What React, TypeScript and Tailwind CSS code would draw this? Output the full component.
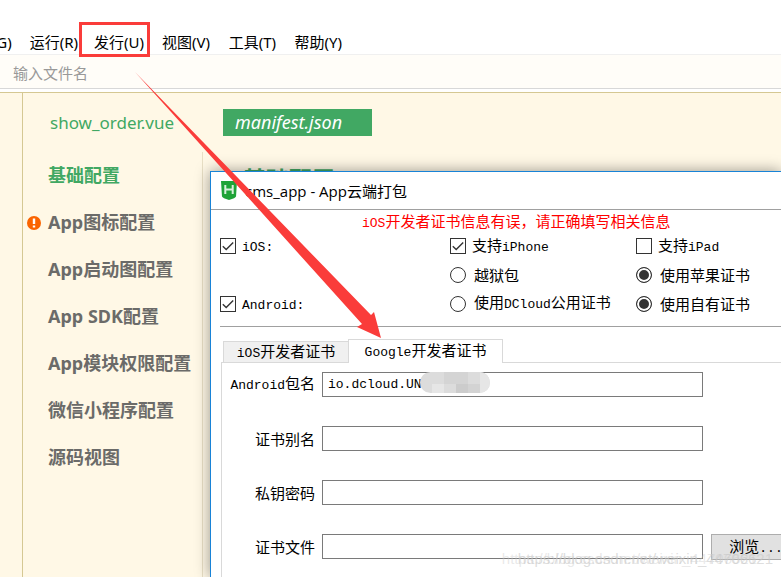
import { Fragment, ReactNode } from "react";

const MENUS = ["运行(R)", "发行(U)", "视图(V)", "工具(T)", "帮助(Y)"];

const SECTIONS = [
    { label: "基础配置", active: true },
    { label: "App图标配置", warn: true },
    { label: "App启动图配置" },
    { label: "App SDK配置" },
    { label: "App模块权限配置" },
    { label: "微信小程序配置" },
    { label: "源码视图" },
];

const FIELDS = [
    { id: "package", label: "Android包名", value: "io.dcloud.UN" },
    { id: "alias", label: "证书别名", value: "" },
    { id: "password", label: "私钥密码", value: "" },
    { id: "file", label: "证书文件", value: "" },
];

// Latin runs are set in a narrower monospace than the Chinese text around them
function Mixed({ text }: { text: string }) {
    return (
        <>
            {text.split(/([\x20-\x7e]+)/).map((part, i) =>
                i % 2 ? (
                    <span key={i} className="font-['Liberation_Mono',monospace] text-[13px]">{part}</span>
                ) : (
                    <Fragment key={i}>{part}</Fragment>
                )
            )}
        </>
    );
}

function Tick({ label, checked }: { label: string; checked?: boolean }) {
    return (
        <label className="flex items-center gap-1.5">
            <span className="relative h-4 w-4 shrink-0">
                <input type="checkbox" defaultChecked={checked} className="peer block h-4 w-4 appearance-none border border-[#333]" />
                <svg viewBox="0 0 16 16" className="pointer-events-none absolute inset-0 hidden h-4 w-4 peer-checked:block" fill="none" stroke="#333" strokeWidth="1.4">
                    <path d="M2.8 8.2 6.2 11.5 13.2 4.5" />
                </svg>
            </span>
            <span className="pt-0.5"><Mixed text={label} /></span>
        </label>
    );
}

function Choice({ name, label, checked }: { name: string; label: string; checked?: boolean }) {
    return (
        <label className="flex items-center gap-2">
            <input
                type="radio"
                name={name}
                defaultChecked={checked}
                className="h-4 w-4 shrink-0 appearance-none rounded-full border border-[#333] checked:bg-[#333] checked:shadow-[inset_0_0_0_2px_#fff]"
            />
            <span><Mixed text={label} /></span>
        </label>
    );
}

function Row({ children }: { children: ReactNode }) {
    return <div className="grid h-[29px] grid-cols-[230px_186px_1fr] items-center">{children}</div>;
}

function Logo() {
    return (
        <svg viewBox="0 0 16 19" className="h-[19px] w-4 shrink-0">
            <path d="M0 0h16l-1 15.5Q14.5 17 8 19 1.5 17 1 15.5z" fill="#1fa337" />
            <path d="M4.3 4v9M11.7 4v9M4.3 8.5h7.4" stroke="#d9f0dc" strokeWidth="2" fill="none" />
        </svg>
    );
}

function Dialog() {
    return (
        <section className="absolute top-[171px] right-0 bottom-0 left-[210px] overflow-hidden border-t border-l border-[#1883d7] bg-white font-['Noto_Sans_CJK_SC',sans-serif] text-[15px] leading-[22px] text-black shadow-[0_0_14px_rgba(0,0,0,0.4)]">
            <header className="flex h-[38px] items-center gap-2 border-b border-[#a0a0a0] px-[10px] font-['Open_Sans','Noto_Sans_CJK_SC',sans-serif]">
                <Logo />
                <h1>cms_app - App云端打包</h1>
            </header>

            <p className="h-[21px] pl-[151px] whitespace-nowrap text-[#f00]">
                <Mixed text="iOS开发者证书信息有误，请正确填写相关信息" />
            </p>

            <div className="ml-[10px] whitespace-nowrap">
                <div className="-ml-px h-24 border-b border-[#a0a0a0]">
                    <Row>
                        <Tick label="iOS:" checked />
                        <Tick label="支持iPhone" checked />
                        <Tick label="支持iPad" />
                    </Row>
                    <Row>
                        <span />
                        <Choice name="ios" label="越狱包" />
                        <Choice name="ios" label="使用苹果证书" checked />
                    </Row>
                    <Row>
                        <Tick label="Android:" checked />
                        <Choice name="android" label="使用DCloud公用证书" />
                        <Choice name="android" label="使用自有证书" checked />
                    </Row>
                </div>

                <div role="tablist" className="mt-3 flex items-end">
                    <span className="h-6 w-0.5 border-b border-[#d9d9d9]" />
                    <button role="tab" className="h-[22px] w-[125px] border border-r-0 border-[#d9d9d9] bg-[#f0f0f0] leading-[18px]">
                        <Mixed text="iOS开发者证书" />
                    </button>
                    <button role="tab" aria-selected="true" className="h-6 w-[155px] border border-b-0 border-[#d9d9d9] bg-white leading-5">
                        <Mixed text="Google开发者证书" />
                    </button>
                    <span className="h-6 flex-1 border-b border-[#d9d9d9]" />
                </div>

                <div className="flex h-[240px] flex-col gap-[29px] border-l border-[#d9d9d9] pt-[9px]">
                    {FIELDS.map((field) => (
                        <div key={field.id} className="flex h-[25px] items-center">
                            <label htmlFor={field.id} className="w-[93px] shrink-0 text-right">
                                <Mixed text={field.label} />
                            </label>
                            <div className="relative ml-[7px] w-[381px] shrink-0">
                                <input
                                    id={field.id}
                                    defaultValue={field.value}
                                    className="block h-[25px] w-full border border-[#7a7a7a] bg-white px-[5px] font-['Liberation_Mono',monospace] text-[13px]"
                                />
                                {field.value && <Smudge />}
                            </div>
                            {field.id === "file" && (
                                <button className="ml-2 h-[26px] w-[90px] shrink-0 border border-[#adadad] bg-[#e1e1e1]">
                                    <Mixed text="浏览..." />
                                </button>
                            )}
                        </div>
                    ))}
                </div>
            </div>
        </section>
    );
}

function Smudge() {
    return (
        <svg viewBox="0 0 70 21" className="absolute top-0 left-[98px] h-[21px] w-[70px]">
            <clipPath id="smudge">
                <rect width="70" height="21" rx="10.5" />
            </clipPath>
            <g clipPath="url(#smudge)" shapeRendering="crispEdges">
                <rect width="70" height="21" fill="#dcdcdc" />
                <rect x="12" y="12" width="12" height="9" fill="#e6e6e6" />
                <rect x="24" y="0" width="24" height="12" fill="#d4d4d4" />
                <rect x="36" y="12" width="12" height="9" fill="#cccccc" />
                <rect x="48" y="12" width="12" height="9" fill="#d3d3d3" />
                <rect x="60" y="0" width="10" height="21" fill="#e6e6e6" />
            </g>
        </svg>
    );
}

export default function App() {
    return (
        <div className="relative flex h-screen flex-col overflow-hidden bg-white font-['Noto_Sans','Noto_Sans_CJK_SC',sans-serif]">
            <nav className="flex h-[54px] shrink-0 items-end text-[15px] text-black">
                <button className="-ml-1 h-6 w-4 whitespace-nowrap">G)</button>
                {MENUS.map((item) => (
                    <button key={item} className="h-6 w-[66px] text-right whitespace-nowrap">{item}</button>
                ))}
            </nav>

            <div className="h-[35px] shrink-0 border-t border-b border-t-[#f0f0f0] border-b-[#d8d8d8] bg-[#fffdf8]">
                <input
                    aria-label="文件名"
                    placeholder="输入文件名"
                    className="h-full w-full bg-transparent px-[13px] pt-0.5 text-[15px] placeholder:text-[#999]"
                />
            </div>

            <div className="mt-[3px] flex flex-1 border-t border-[#d5c893] bg-[#fff8e6]">
                <div className="w-[23px] shrink-0 border-r border-[#d5c893]" />
                <div className="flex flex-1 flex-col">
                    <div className="mt-4 flex h-[27px] items-center text-[#41a863]">
                        <button className="w-[200px] pl-[27px] text-left text-[17px]">show_order.vue</button>
                        <button className="h-[27px] w-[149px] bg-[#41a863] pl-3 text-left text-[18px] text-white italic">manifest.json</button>
                    </div>
                    <div className="mt-4 flex flex-1">
                        <ul className="w-[180px] shrink-0 border-r border-[#e8dfc5] text-[18px] font-bold text-[#6b6b69]">
                            {SECTIONS.map((item) => (
                                <li key={item.label} className="flex h-[47px] items-center">
                                    <span className="w-[25px] shrink-0 pl-1">
                                        {item.warn && (
                                            <svg viewBox="0 0 14 14" className="h-3.5 w-3.5">
                                                <circle cx="7" cy="7" r="7" fill="#fa6400" />
                                                <path d="M7 2.5v5.5M7 9.5v2" stroke="#fff" strokeWidth="2.4" />
                                            </svg>
                                        )}
                                    </span>
                                    <span className={item.active ? "whitespace-nowrap text-[#41a863]" : "whitespace-nowrap"}>
                                        {item.label}
                                    </span>
                                </li>
                            ))}
                        </ul>
                        <h2 className="pt-1 pl-10 text-[23px] leading-[46px] font-bold text-[#41a863]">基础配置</h2>
                    </div>
                </div>
            </div>

            <Dialog />

            {/* Highlight on the menu and the arrow to the certificate tab */}
            <div className="pointer-events-none absolute top-[22px] left-[79px] h-[35px] w-[71px] border-[3px] border-[#fa3c3a]" />
            <svg viewBox="0 0 250 270" className="pointer-events-none absolute top-[70px] left-[133px] h-[270px] w-[250px]">
                <path d="M2 2 229 254 224 257 248 268 241 242 238 245Z" fill="#fa3c3a" />
            </svg>

            <div className="pointer-events-none absolute right-2 bottom-2 font-['Liberation_Sans',sans-serif] text-[15px] leading-5 whitespace-nowrap text-[#c8c8c8]/60 [text-shadow:-16px_0_0_rgba(200,200,200,0.4)]">
                https://blog.csdn.net/weixin_44706621
            </div>
        </div>
    );
}
